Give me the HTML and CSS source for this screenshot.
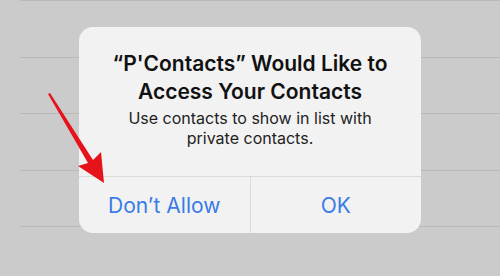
FILE: index.html
```html
<!DOCTYPE html>
<html>
<head>
<meta charset="utf-8">
<link rel="stylesheet" href="styles.css">
</head>
<body>
<div class="list">
  <div class="row"></div>
  <div class="row"></div>
  <div class="row"></div>
  <div class="row"></div>
  <div class="row"></div>
</div>
<div class="alert">
  <div class="alert-body">
    <div class="title">“P'Contacts” Would Like to Access Your Contacts</div>
    <div class="message">Use contacts to show in list with private contacts.</div>
  </div>
  <div class="actions">
    <div class="btn">Don’t Allow</div>
    <div class="btn">OK</div>
  </div>
</div>
<svg class="arrow" width="120" height="200" viewBox="0 0 120 200">
  <polygon points="48,94 50,93 93,160 101,152 104,183 78,166 88,163" fill="#e5141b"/>
</svg>
</body>
</html>
```
FILE: styles.css
```css
html, body {
  margin: 0;
  padding: 0;
}
body {
  width: 500px;
  height: 276px;
  background: #cbcbcb;
  overflow: hidden;
  position: relative;
  font-family: Inter, "Noto Sans", sans-serif;
}
.list {
  margin-left: 20px;
  display: flex;
  flex-direction: column;
}
.row {
  height: 56.5px;
  box-sizing: border-box;
  border-top: 1px solid #b9b9b9;
}
.alert {
  position: absolute;
  left: 79px;
  top: 27px;
  width: 342px;
  height: 206px;
  background: #f2f2f2;
  border-radius: 14px;
  display: flex;
  flex-direction: column;
  overflow: hidden;
}
.alert-body {
  flex: 1;
  padding: 23px 20px 0;
  text-align: center;
}
.title {
  font-size: 21px;
  font-weight: 600;
  line-height: 28px;
  color: #111;
  padding: 0 10px;
}
.message {
  margin-top: 2px;
  font-size: 16px;
  line-height: 20px;
  color: #222;
  padding: 0 16px;
}
.actions {
  height: 56px;
  display: flex;
  border-top: 1px solid #dadada;
}
.btn {
  flex: 1;
  display: flex;
  align-items: center;
  justify-content: center;
  font-size: 21px;
  color: #3a7be8;
}
.btn + .btn {
  border-left: 1px solid #dadada;
}
.arrow {
  position: absolute;
  left: 0;
  top: 0;
}
```
